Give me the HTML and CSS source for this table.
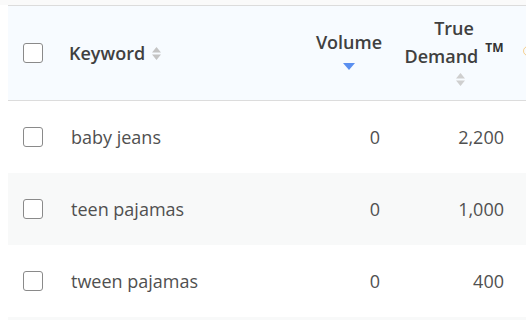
FILE: index.html
```html
<!DOCTYPE html>
<html>
<head>
<meta charset="utf-8">
<link rel="stylesheet" href="styles.css">
</head>
<body>
<div class="topstrip"></div>
<div class="wrap">
  <div class="table">
    <div class="row head">
      <div class="cell chk"><span class="box"></span></div>
      <div class="cell kw">Keyword
        <svg class="sort" width="9" height="13" viewBox="0 0 9 13"><path d="M4.5 0 L9 5.5 H0 Z M4.5 13 L9 7.5 H0 Z" fill="#c4c4c4"/></svg>
      </div>
      <div class="cell vol-h">
        <span>Volume</span>
        <svg class="arrow" width="12" height="7" viewBox="0 0 12 7"><path d="M0 0 H12 L6 7 Z" fill="#5a8ff0"/></svg>
      </div>
      <div class="cell td-h">
        <span class="tdtext">True<br>Demand<sup class="tm">TM</sup></span>
        <svg class="sort2" width="9" height="13" viewBox="0 0 9 13"><path d="M4.5 0 L9 5.5 H0 Z M4.5 13 L9 7.5 H0 Z" fill="#cfcfcf"/></svg>
      </div>
      <div class="cell next"><span class="dot"></span></div>
    </div>
    <div class="row">
      <div class="cell chk"><span class="box"></span></div>
      <div class="cell kwt">baby jeans</div>
      <div class="cell num">0</div>
      <div class="cell num2">2,200</div>
      <div class="cell next"></div>
    </div>
    <div class="row alt">
      <div class="cell chk"><span class="box"></span></div>
      <div class="cell kwt">teen pajamas</div>
      <div class="cell num">0</div>
      <div class="cell num2">1,000</div>
      <div class="cell next"></div>
    </div>
    <div class="row">
      <div class="cell chk"><span class="box"></span></div>
      <div class="cell kwt">tween pajamas</div>
      <div class="cell num">0</div>
      <div class="cell num2">400</div>
      <div class="cell next"></div>
    </div>
    <div class="row alt">
      <div class="cell chk"><span class="box"></span></div>
      <div class="cell kwt"></div>
      <div class="cell num"></div>
      <div class="cell num2"></div>
      <div class="cell next"></div>
    </div>
  </div>
</div>
</body>
</html>
```
FILE: styles.css
```css
html, body {
  margin: 0;
  padding: 0;
  background: #ffffff;
  overflow: hidden;
  font-family: "Open Sans", "Liberation Sans", sans-serif;
}
.topstrip {
  height: 5px;
  background: #fafafa;
}
.wrap {
  padding-left: 8px;
  overflow: hidden;
  width: 518px;
  height: 315px;
}
.table {
  width: 620px;
  border-top: 1px solid #dcdcdc;
}
.row {
  display: grid;
  grid-template-columns: 47px 249px 88px 124px 112px;
  height: 72px;
  background: #ffffff;
}
.row.alt {
  background: #f8f9f9;
}
.row.head {
  height: 94px;
  background: #f7fbff;
  border-bottom: 1px solid #dcdcdc;
}
.cell {
  display: flex;
  align-items: center;
}
.chk {
  padding-left: 15px;
}
.box {
  width: 18px;
  height: 18px;
  border: 1px solid #8a8a8a;
  border-radius: 3px;
  background: #fff;
}
.kw {
  padding-left: 14px;
  font-size: 18px;
  font-weight: 600;
  color: #404040;
  gap: 7px;
}
.sort {
  margin-top: 1px;
}
.vol-h, .td-h {
  flex-direction: column;
  justify-content: center;
  font-size: 18px;
  font-weight: 600;
  color: #404040;
  text-align: center;
  line-height: 28px;
}
.vol-h {
  padding-left: 2px;
  padding-bottom: 8px;
}
.arrow {
  margin-top: 7px;
}
.td-h {
  padding-bottom: 6px;
}
.tdtext {
  display: block;
}
.tm {
  font-size: 12px;
  font-weight: 700;
  color: #333333;
  margin-left: 7px;
  vertical-align: 0;
  position: relative;
  top: -11px;
  line-height: 0;
}
.sort2 {
  margin-top: 3px;
  margin-left: 12px;
}
.next {
  padding-left: 7px;
}
.dot {
  width: 8px;
  height: 8px;
  border-radius: 50%;
  border: 1px solid #f5a623;
  opacity: 0.5;
  margin-bottom: 4px;
}
.kwt {
  padding-left: 16px;
  font-size: 18px;
  color: #505050;
}
.num, .num2 {
  justify-content: flex-end;
  font-size: 18px;
  color: #505050;
}
.num {
  padding-right: 12px;
}
.num2 {
  padding-right: 12px;
}
```
